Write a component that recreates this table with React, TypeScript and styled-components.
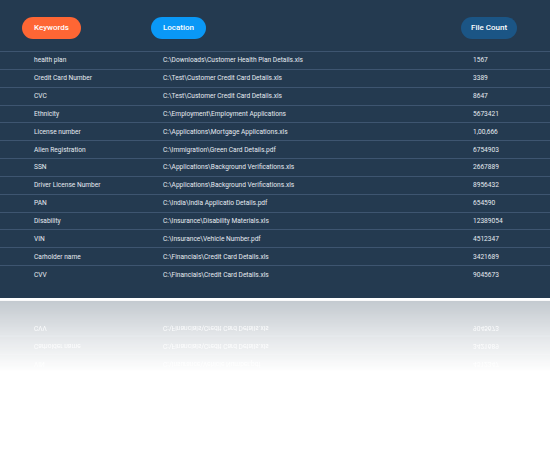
import React from "react";
import styled, { createGlobalStyle } from "styled-components";

const Global = createGlobalStyle`
  html, body { margin: 0; padding: 0; background: #ffffff; }
  body { font-family: Roboto, "Open Sans", sans-serif; }
`;

const Page = styled.div`
  width: 550px;
  background: #ffffff;
`;

const Panel = styled.section`
  background: #243a50;
  padding-bottom: 15px;
`;

const Reflection = styled.div`
  margin-top: 3px;
  background: #243a50;
  padding-bottom: 18px;
  transform: scaleY(-1);
  opacity: 0.27;
  -webkit-mask-image: linear-gradient(to top, #000 0%, rgba(0, 0, 0, 0.5) 45%, transparent 100%);
  mask-image: linear-gradient(to top, #000 0%, rgba(0, 0, 0, 0.5) 45%, transparent 100%);
`;

const Header = styled.div`
  display: grid;
  grid-template-columns: 129px 310px auto;
  align-items: center;
  padding: 17px 0 12px 22px;
  height: 22px;
`;

const Pill = styled.div<{ $bg: string; $pad: number }>`
  justify-self: start;
  height: 22px;
  line-height: 22px;
  border-radius: 11px;
  padding: 0 ${(p) => p.$pad}px;
  background: ${(p) => p.$bg};
  color: #ffffff;
  font-size: 8px;
  font-weight: 500;
`;

const Row = styled.div`
  display: grid;
  grid-template-columns: 129px 310px auto;
  align-items: center;
  height: 16.85px;
  padding-left: 34px;
  border-top: 1px solid #3e5570;
`;

const Cell = styled.div`
  color: #e6ebf0;
  font-size: 6.6px;
  white-space: nowrap;
`;

const rows: [string, string, string][] = [
  ["health plan", "C:\\Downloads\\Customer Health Plan Details.xls", "1567"],
  ["Credit Card Number", "C:\\Test\\Customer Credit Card Details.xls", "3389"],
  ["CVC", "C:\\Test\\Customer Credit Card Details.xls", "8647"],
  ["Ethnicity", "C:\\Employment\\Employment Applications", "5673421"],
  ["License number", "C:\\Applications\\Mortgage Applications.xls", "1,00,666"],
  ["Alien Registration", "C:\\Immigration\\Green Card Details.pdf", "6754903"],
  ["SSN", "C:\\Applications\\Background Verifications.xls", "2667889"],
  ["Driver License Number", "C:\\Applications\\Background Verifications.xls", "8956432"],
  ["PAN", "C:\\India\\India Applicatio Details.pdf", "654590"],
  ["Disability", "C:\\Insurance\\Disability Materials.xls", "12389054"],
  ["VIN", "C:\\Insurance\\Vehicle Number.pdf", "4512347"],
  ["Carholder name", "C:\\Financials\\Credit Card Details.xls", "3421689"],
  ["CVV", "C:\\Financials\\Credit Card Details.xls", "9045673"],
];

function Rows({ list }: { list: [string, string, string][] }) {
  return (
    <>
      {list.map(([k, l, c]) => (
        <Row key={k}>
          <Cell>{k}</Cell>
          <Cell>{l}</Cell>
          <Cell>{c}</Cell>
        </Row>
      ))}
    </>
  );
}

export default function App() {
  return (
    <Page>
      <Global />
      <Panel>
        <Header>
          <Pill $bg="#fe6634" $pad={12}>Keywords</Pill>
          <Pill $bg="#0a98f6" $pad={12}>Location</Pill>
          <Pill $bg="#1b5585" $pad={10}>File Count</Pill>
        </Header>
        <Rows list={rows} />
      </Panel>
      <Reflection aria-hidden="true">
        <Rows list={rows.slice(-3)} />
      </Reflection>
    </Page>
  );
}
